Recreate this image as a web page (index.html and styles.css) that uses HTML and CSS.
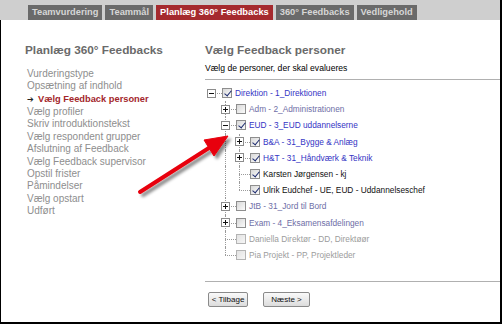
FILE: index.html
```html
<!DOCTYPE html>
<html lang="da">
<head>
    <meta charset="UTF-8">
    <title>Planlæg 360° Feedbacks</title>
    <link rel="stylesheet" href="styles.css">
</head>
<body>
<div class="page">
    <!-- Top menu -->
    <div class="topbar">
        <span class="tab">Teamvurdering</span>
        <span class="tab">Teammål</span>
        <span class="tab active">Planlæg 360° Feedbacks</span>
        <span class="tab">360° Feedbacks</span>
        <span class="tab">Vedligehold</span>
    </div>

    <div class="content">
        <!-- Wizard steps -->
        <div class="side">
            <div class="heading">Planlæg 360° Feedbacks</div>
            <ul class="steps">
                <li>Vurderingstype</li>
                <li>Opsætning af indhold</li>
                <li class="current"><span class="arrow">&#10132;</span>Vælg Feedback personer</li>
                <li>Vælg profiler</li>
                <li>Skriv introduktionstekst</li>
                <li>Vælg respondent grupper</li>
                <li>Afslutning af Feedback</li>
                <li>Vælg Feedback supervisor</li>
                <li>Opstil frister</li>
                <li>Påmindelser</li>
                <li>Vælg opstart</li>
                <li>Udført</li>
            </ul>
        </div>

        <!-- Person tree -->
        <div class="main">
            <div class="heading">Vælg Feedback personer</div>
            <div class="subtitle">Vælg de personer, der skal evalueres</div>

            <div class="tree">
                <div class="row">
                    <span class="cell root"><span class="exp"></span></span>
                    <span class="cb on"></span><span class="txt link">Direktion - 1_Direktionen</span>
                </div>
                <div class="row">
                    <span class="cell"></span>
                    <span class="cell tee"><span class="exp plus"></span></span>
                    <span class="cb"></span><span class="txt dim">Adm - 2_Administrationen</span>
                </div>
                <div class="row">
                    <span class="cell"></span>
                    <span class="cell tee"><span class="exp"></span></span>
                    <span class="cb on"></span><span class="txt link">EUD - 3_EUD uddannelserne</span>
                </div>
                <div class="row">
                    <span class="cell"></span>
                    <span class="cell vl"></span>
                    <span class="cell tee"><span class="exp plus"></span></span>
                    <span class="cb on"></span><span class="txt link">B&amp;A - 31_Bygge &amp; Anlæg</span>
                </div>
                <div class="row">
                    <span class="cell"></span>
                    <span class="cell vl"></span>
                    <span class="cell tee"><span class="exp plus"></span></span>
                    <span class="cb on"></span><span class="txt link">H&amp;T - 31_Håndværk &amp; Teknik</span>
                </div>
                <div class="row">
                    <span class="cell"></span>
                    <span class="cell vl"></span>
                    <span class="cell tee"></span>
                    <span class="cb on"></span><span class="txt">Karsten Jørgensen - kj</span>
                </div>
                <div class="row">
                    <span class="cell"></span>
                    <span class="cell vl"></span>
                    <span class="cell end"></span>
                    <span class="cb on"></span><span class="txt">Ulrik Eudchef - UE, EUD - Uddannelseschef</span>
                </div>
                <div class="row">
                    <span class="cell"></span>
                    <span class="cell tee"><span class="exp plus"></span></span>
                    <span class="cb"></span><span class="txt dim">JtB - 31_Jord til Bord</span>
                </div>
                <div class="row">
                    <span class="cell"></span>
                    <span class="cell tee"><span class="exp plus"></span></span>
                    <span class="cb"></span><span class="txt dim">Exam - 4_Eksamensafdelingen</span>
                </div>
                <div class="row">
                    <span class="cell"></span>
                    <span class="cell tee"></span>
                    <span class="cb off"></span><span class="txt grey">Daniella Direktør - DD, Direktøør</span>
                </div>
                <div class="row">
                    <span class="cell"></span>
                    <span class="cell end"></span>
                    <span class="cb off"></span><span class="txt grey">Pia Projekt - PP, Projektleder</span>
                </div>
            </div>

            <div class="buttons">
                <button class="btn">&lt; Tilbage</button>
                <button class="btn">Næste &gt;</button>
            </div>
        </div>
    </div>

    <!-- Red annotation arrow -->
    <svg class="pointer" width="502" height="324" viewBox="0 0 502 324">
        <defs>
            <filter id="shadow" x="-20%" y="-20%" width="140%" height="140%">
                <feDropShadow dx="3" dy="3" stdDeviation="1.5" flood-color="#000" flood-opacity="0.45"/>
            </filter>
        </defs>
        <g filter="url(#shadow)" fill="#e8000a" stroke="#e8000a">
            <line x1="140" y1="192" x2="212" y2="146" stroke-width="4" stroke-linecap="round"/>
            <polygon points="228,136 204,140 214,156" stroke-width="1" stroke-linejoin="round"/>
        </g>
    </svg>
</div>
</body>
</html>
```

FILE: styles.css
```css
* {
    box-sizing: border-box;
}
body {
    margin: 0;
    background: #fff;
    font-family: "Liberation Sans", Arial, sans-serif;
}
.page { /* the whole captured window */
    position: relative;
    width: 502px;
    height: 324px;
    border-right: 2px solid #000;
    border-bottom: 2px solid #000;
    overflow: hidden;
}

/* top menu */
.topbar {
    height: 20px;
    background: #cfcfcf;
    display: flex;
    align-items: flex-end;
    gap: 3px;
    padding-left: 28px;
}
.tab {
    height: 15px;
    line-height: 15px;
    padding: 0 4px;
    background: #6a6a6a;
    color: #d6d6d6;
    font-size: 9.3px;
    font-weight: bold;
    white-space: nowrap;
}
.tab.active {
    background: #a52a2e;
    color: #fff;
}

/* two columns */
.content {
    display: flex;
    height: 302px;
    border-left: 1px solid #000;
    padding: 23px 0 0 24px;
}
.side {
    width: 180px;
}
.main {
    flex: 1;
}
.heading {
    font-size: 11.8px;
    font-weight: bold;
    line-height: 14px;
    color: #6a6a6a;
    white-space: nowrap;
}

/* wizard steps */
.steps {
    list-style: none;
    margin: 10.8px 0 0 2px;
    padding: 0;
}
.steps li {
    font-size: 10px;
    line-height: 12.4px;
    color: #8e8e8e;
    white-space: nowrap;
}
.steps li.current {
    font-size: 9.3px;
    font-weight: bold;
    color: #a3262b;
}
.arrow {
    display: inline-block;
    width: 11px;
    color: #222;
    font-family: "DejaVu Sans", sans-serif;
    font-size: 8px;
}

/* right column */
.subtitle {
    margin-top: 6px;
    padding-bottom: 5.5px;
    border-bottom: 1px solid #b0b0b0;
    font-size: 8.6px;
    line-height: 10px;
    color: #000;
}
.tree {
    margin-top: 5.5px;
    padding-bottom: 17.5px;
    border-bottom: 1px solid #b0b0b0;
}
.row {
    display: flex;
    align-items: center;
    height: 16.2px;
}
.cell { /* one indent step of the tree */
    position: relative;
    width: 14px;
    height: 100%;
    flex: none;
    display: flex;
    align-items: center;
}
.cell.vl::before,
.cell.tee::before,
.cell.end::before { /* vertical dotted line */
    content: "";
    position: absolute;
    left: 6px;
    top: 0;
    bottom: 0;
    border-left: 1px dotted #9a9a9a;
}
.cell.end::before {
    bottom: 50%;
}
.cell.tee::after,
.cell.end::after,
.cell.root::after { /* horizontal dash to the checkbox */
    content: "";
    position: absolute;
    left: 6px;
    width: 11px;
    top: 50%;
    border-top: 1px dotted #9a9a9a;
}
.exp { /* expand / collapse box */
    position: relative;
    z-index: 1;
    width: 9px;
    height: 9px;
    margin-left: 2px;
    border: 1px solid #8c8c8c;
    background: #fff;
}
.exp::before {
    content: "";
    position: absolute;
    left: 1px;
    right: 1px;
    top: 3px;
    height: 1px;
    background: #111;
}
.exp.plus::after {
    content: "";
    position: absolute;
    top: 1px;
    bottom: 1px;
    left: 3px;
    width: 1px;
    background: #111;
}
.cb { /* checkbox */
    position: relative;
    flex: none;
    width: 10px;
    height: 10px;
    margin-left: 3px;
    border: 1px solid #8e8e8e;
    background: linear-gradient(135deg, #d8d8d8, #fbfbfb);
}
.cb.on::after {
    content: "";
    position: absolute;
    left: 2.5px;
    top: 0;
    width: 3px;
    height: 6px;
    border-right: 1.5px solid #1c2a6e;
    border-bottom: 1.5px solid #1c2a6e;
    transform: rotate(40deg);
}
.cb.off {
    border-color: #b4b4b4;
    background: linear-gradient(135deg, #e2e2e2, #f6f6f6);
}
.txt {
    margin-left: 3px;
    font-size: 8.3px;
    color: #111;
    white-space: nowrap;
}
.txt.link {
    color: #3434c4;
}
.txt.dim {
    color: #6e6ea6;
}
.txt.grey {
    color: #9c9c9c;
}

/* navigation buttons */
.buttons {
    display: flex;
    gap: 15px;
    margin-top: 10px;
    padding-left: 3px;
}
.btn {
    height: 15px;
    padding: 0;
    border: 1px solid #8a8a8a;
    border-radius: 2px;
    background: linear-gradient(#fafafa, #dcdcdc);
    font-family: "Liberation Sans", Arial, sans-serif;
    font-size: 8px;
    color: #111;
    white-space: nowrap;
}
.btn:first-child {
    width: 40px;
}
.btn:last-child {
    width: 47px;
}

/* annotation */
.pointer {
    position: absolute;
    left: 0;
    top: 0;
    pointer-events: none;
}
```
